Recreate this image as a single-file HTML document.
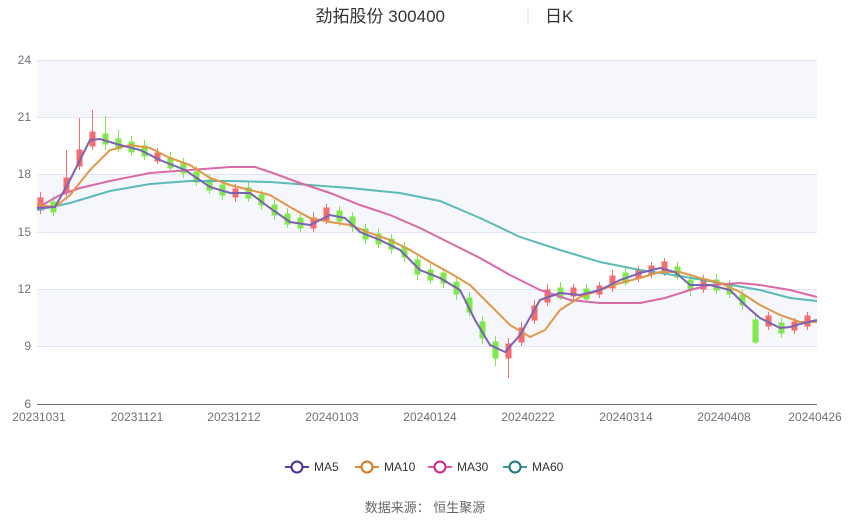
<!DOCTYPE html>
<html><head><meta charset="utf-8"><style>
body{margin:0;background:#fff;width:850px;height:517px;overflow:hidden;font-family:"Liberation Sans","Noto Sans CJK SC",sans-serif}
</style></head><body>
<svg width="850" height="517" xmlns="http://www.w3.org/2000/svg" font-family="Liberation Sans, Noto Sans CJK SC, sans-serif">
<rect x="37" y="60" width="780" height="57.3" fill="#f5f7fc"/>
<rect x="37" y="174.7" width="780" height="57.3" fill="#f5f7fc"/>
<rect x="37" y="289.3" width="780" height="57.3" fill="#f5f7fc"/>
<g stroke="#e0e6f1" stroke-width="1">
<line x1="37" y1="60.5" x2="817" y2="60.5"/><line x1="37" y1="117.5" x2="817" y2="117.5"/><line x1="37" y1="174.5" x2="817" y2="174.5"/><line x1="37" y1="232.5" x2="817" y2="232.5"/><line x1="37" y1="289.5" x2="817" y2="289.5"/><line x1="37" y1="346.5" x2="817" y2="346.5"/>
</g>
<line x1="37" y1="404.5" x2="817" y2="404.5" stroke="#6e7079"/>
<text x="445" y="22" font-size="17" fill="#333" text-anchor="end">劲拓股份 300400</text>
<line x1="528" y1="8" x2="528" y2="24" stroke="#ddd"/>
<text x="545" y="22" font-size="17" fill="#333">日K</text>
<g font-size="12" fill="#6e7079" text-anchor="end">
<text x="31" y="64">24</text><text x="31" y="121">21</text><text x="31" y="178">18</text><text x="31" y="236">15</text><text x="31" y="293">12</text><text x="31" y="350">9</text><text x="31" y="408">6</text>
</g>
<g font-size="12" fill="#6e7079" text-anchor="middle">
<text x="39" y="421">20231031</text><text x="137" y="421">20231121</text><text x="234" y="421">20231212</text><text x="332" y="421">20240103</text><text x="430" y="421">20240124</text><text x="528" y="421">20240222</text><text x="626" y="421">20240314</text><text x="724" y="421">20240408</text><text x="815" y="421">20240426</text>
</g>
<g fill="#f26d6d" stroke="#f26d6d">
<rect x="38" y="198" width="5" height="12"/><rect x="64" y="178" width="5" height="14"/><rect x="77" y="150" width="5" height="16"/><rect x="90" y="132" width="5" height="14"/><rect x="155" y="153" width="5" height="8"/><rect x="233" y="189" width="5" height="8"/><rect x="311" y="218" width="5" height="10"/><rect x="324" y="208" width="5" height="12"/><rect x="506" y="344" width="5" height="14"/><rect x="519" y="328" width="5" height="14"/><rect x="532" y="306" width="5" height="14"/><rect x="545" y="290" width="5" height="12"/><rect x="571" y="288" width="5" height="8"/><rect x="597" y="286" width="5" height="8"/><rect x="610" y="276" width="5" height="12"/><rect x="636" y="270" width="5" height="8"/><rect x="649" y="266" width="5" height="8"/><rect x="662" y="262" width="5" height="10"/><rect x="701" y="279" width="5" height="10"/><rect x="766" y="316" width="5" height="10"/><rect x="792" y="322" width="5" height="8"/><rect x="805" y="316" width="5" height="10"/>
<path d="M40.5 192v22M66.5 150v46M79.5 118v52M92.5 110v40M157.5 148v16M235.5 184v18M313.5 212v20M326.5 204v20M508.5 338v40M521.5 322v24M534.5 300v24M547.5 284v22M573.5 284v16M599.5 282v16M612.5 270v22M638.5 266v16M651.5 262v16M664.5 258v18M703.5 275v18M768.5 312v18M794.5 318v16M807.5 312v18"/>
</g>
<g fill="#7fe84a" stroke="#7fe84a">
<rect x="51" y="202" width="5" height="10"/><rect x="103" y="134" width="5" height="10"/><rect x="116" y="139" width="5" height="10"/><rect x="129" y="142" width="5" height="10"/><rect x="142" y="146" width="5" height="10"/><rect x="168" y="158" width="5" height="10"/><rect x="181" y="163" width="5" height="10"/><rect x="194" y="172" width="5" height="10"/><rect x="207" y="180" width="5" height="10"/><rect x="220" y="185" width="5" height="10"/><rect x="246" y="188" width="5" height="10"/><rect x="259" y="195" width="5" height="10"/><rect x="272" y="205" width="5" height="10"/><rect x="285" y="214" width="5" height="10"/><rect x="298" y="218" width="5" height="10"/><rect x="337" y="211" width="5" height="10"/><rect x="350" y="217" width="5" height="10"/><rect x="363" y="229" width="5" height="10"/><rect x="376" y="234" width="5" height="10"/><rect x="389" y="239" width="5" height="10"/><rect x="402" y="247" width="5" height="10"/><rect x="415" y="260" width="5" height="14"/><rect x="428" y="270" width="5" height="10"/><rect x="441" y="273" width="5" height="10"/><rect x="454" y="282" width="5" height="12"/><rect x="467" y="298" width="5" height="14"/><rect x="480" y="322" width="5" height="16"/><rect x="493" y="342" width="5" height="16"/><rect x="558" y="288" width="5" height="10"/><rect x="584" y="289" width="5" height="10"/><rect x="623" y="273" width="5" height="10"/><rect x="675" y="267" width="5" height="10"/><rect x="688" y="280" width="5" height="10"/><rect x="714" y="280" width="5" height="10"/><rect x="727" y="284" width="5" height="10"/><rect x="740" y="295" width="5" height="10"/><rect x="753" y="320" width="5" height="22"/><rect x="779" y="323" width="5" height="10"/>
<path d="M53.5 196v20M105.5 116v34M118.5 130v22M131.5 136v20M144.5 140v20M170.5 152v20M183.5 158v20M196.5 166v20M209.5 174v20M222.5 180v20M248.5 182v20M261.5 190v20M274.5 200v20M287.5 208v20M300.5 212v20M339.5 206v20M352.5 212v20M365.5 224v20M378.5 228v20M391.5 234v20M404.5 242v20M417.5 256v24M430.5 264v20M443.5 268v20M456.5 276v24M469.5 292v24M482.5 316v28M495.5 336v30M560.5 282v18M586.5 284v18M625.5 268v18M677.5 262v18M690.5 274v22M716.5 274v20M729.5 280v18M742.5 290v20M755.5 314v30M781.5 318v20"/>
</g>
<g fill="none" stroke-width="2">
<polyline stroke="#4db3ae" stroke-opacity=".9" points="37,210 70,203 110,191 150,184 190,181 230,181 270,182 310,185 350,188 400,193 440,201 480,218 520,237 560,250 600,262 640,270 680,276 720,283 760,290 790,298 817,301"/>
<polyline stroke="#d96aa7" points="37,208 60,195 80,188 110,181 150,173 190,170 230,167 255,167 270,172 300,183 330,193 360,205 390,215 420,228 450,243 480,258 510,275 540,290 570,300 600,303 640,303 665,298 690,290 710,285 740,283 760,285 790,290 817,297"/>
<polyline stroke="#e0974a" points="37,205 55,207 70,195 90,170 110,150 130,145 150,148 170,158 190,165 210,178 230,185 250,190 270,195 290,207 310,218 330,222 350,225 370,233 390,240 410,250 430,262 450,273 470,285 490,305 510,325 530,337 545,330 560,310 580,297 600,290 620,283 640,278 660,272 680,272 700,278 720,283 740,292 760,305 780,315 800,322 817,322"/>
<polyline stroke="#7b62b3" points="37,208 55,207 70,180 90,140 100,139 120,145 140,150 160,160 185,170 210,187 230,193 250,193 270,208 290,222 310,225 330,215 345,218 360,232 380,240 400,250 420,270 440,278 460,290 475,320 490,345 505,352 520,335 540,300 560,293 580,295 600,290 620,280 640,273 660,268 675,272 690,285 710,285 730,290 745,305 760,318 780,328 790,327 800,324 817,320"/>
</g>
<g stroke-width="2" fill="#fff" font-size="12">
<line x1="285" y1="467" x2="309" y2="467" stroke="#5b3fa8"/><circle cx="297" cy="467" r="5.5" stroke="#4b2d9f"/><text x="314" y="471" fill="#333" stroke="none">MA5</text>
<line x1="355" y1="467" x2="379" y2="467" stroke="#e08a3a"/><circle cx="367" cy="467" r="5.5" stroke="#d9761a"/><text x="384" y="471" fill="#333" stroke="none">MA10</text>
<line x1="428" y1="467" x2="452" y2="467" stroke="#d65aa0"/><circle cx="440" cy="467" r="5.5" stroke="#c8258a"/><text x="457" y="471" fill="#333" stroke="none">MA30</text>
<line x1="503" y1="467" x2="527" y2="467" stroke="#3d9a9a"/><circle cx="515" cy="467" r="5.5" stroke="#1a7a7a"/><text x="532" y="471" fill="#333" stroke="none">MA60</text>
</g>
<text x="425" y="512" font-size="13" fill="#666" text-anchor="middle">数据来源：  恒生聚源</text>
</svg>
</body></html>
